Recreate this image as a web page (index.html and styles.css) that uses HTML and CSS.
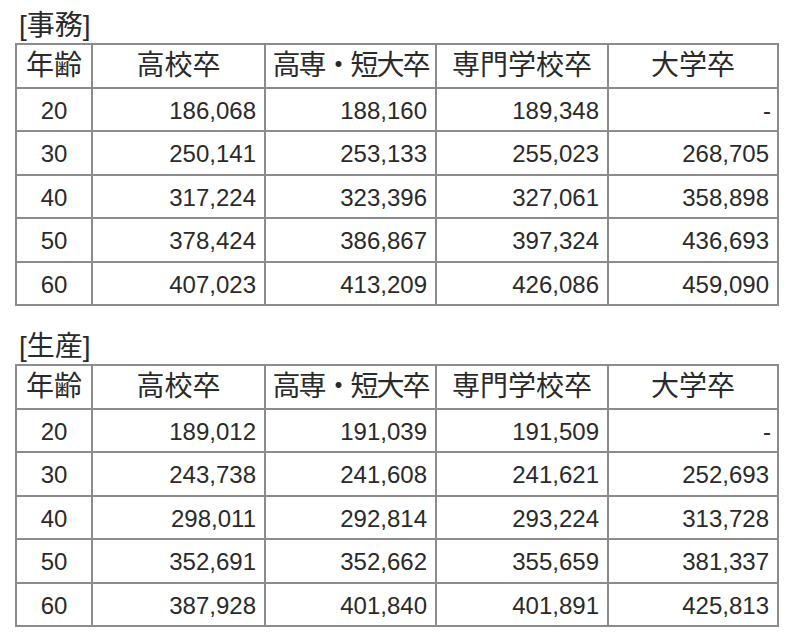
FILE: index.html
```html
<!DOCTYPE html>
<html lang="ja">
<head>
<meta charset="utf-8">
<link rel="stylesheet" href="styles.css">
</head>
<body>
<div class="page">
  <div class="title">[事務]</div>
  <table class="grid">
    <colgroup><col class="c-age"><col class="c1"><col class="c2"><col class="c3"><col class="c4"></colgroup>
    <tr class="head"><th>年齢</th><th>高校卒</th><th class="tight">高専・短大卒</th><th>専門学校卒</th><th>大学卒</th></tr>
    <tr><td class="age">20</td><td>186,068</td><td>188,160</td><td>189,348</td><td class="dash">-</td></tr>
    <tr><td class="age">30</td><td>250,141</td><td>253,133</td><td>255,023</td><td>268,705</td></tr>
    <tr><td class="age">40</td><td>317,224</td><td>323,396</td><td>327,061</td><td>358,898</td></tr>
    <tr><td class="age">50</td><td>378,424</td><td>386,867</td><td>397,324</td><td>436,693</td></tr>
    <tr><td class="age">60</td><td>407,023</td><td>413,209</td><td>426,086</td><td>459,090</td></tr>
  </table>
  <div class="title second">[生産]</div>
  <table class="grid">
    <colgroup><col class="c-age"><col class="c1"><col class="c2"><col class="c3"><col class="c4"></colgroup>
    <tr class="head"><th>年齢</th><th>高校卒</th><th class="tight">高専・短大卒</th><th>専門学校卒</th><th>大学卒</th></tr>
    <tr><td class="age">20</td><td>189,012</td><td>191,039</td><td>191,509</td><td class="dash">-</td></tr>
    <tr><td class="age">30</td><td>243,738</td><td>241,608</td><td>241,621</td><td>252,693</td></tr>
    <tr><td class="age">40</td><td>298,011</td><td>292,814</td><td>293,224</td><td>313,728</td></tr>
    <tr><td class="age">50</td><td>352,691</td><td>352,662</td><td>355,659</td><td>381,337</td></tr>
    <tr><td class="age">60</td><td>387,928</td><td>401,840</td><td>401,891</td><td>425,813</td></tr>
  </table>
</div>
</body>
</html>
```
FILE: styles.css
```css
html, body {
  margin: 0;
  padding: 0;
  background: #ffffff;
}
.page {
  padding: 8px 0 0 15px;
  color: #2a2a2a;
  font-family: "Liberation Sans", "Noto Sans CJK JP", sans-serif;
}
.title {
  font-size: 28px;
  line-height: 35px;
  height: 35px;
  padding-left: 4px;
}
.title.second {
  margin-top: 23px;
}
.grid {
  border-collapse: collapse;
  table-layout: fixed;
  width: 762px;
}
.c-age { width: 76px; }
.c1 { width: 173px; }
.c2 { width: 171px; }
.c3 { width: 172px; }
.c4 { width: 170px; }
.grid tr {
  height: 43.5px;
}
.grid th, .grid td {
  border: 2px solid #8c8c8c;
  padding: 0 8px 0 0;
  vertical-align: middle;
  white-space: nowrap;
}
.grid th {
  font-weight: normal;
  font-size: 28px;
  text-align: center;
  padding: 0;
  line-height: 1;
}
.grid th.tight {
  letter-spacing: -2px;
}
.grid td {
  font-size: 24px;
  text-align: right;
  padding-top: 3px;
}
.grid td.age {
  text-align: center;
  padding-right: 0;
}
.grid td.dash {
  padding-right: 6px;
}
```
